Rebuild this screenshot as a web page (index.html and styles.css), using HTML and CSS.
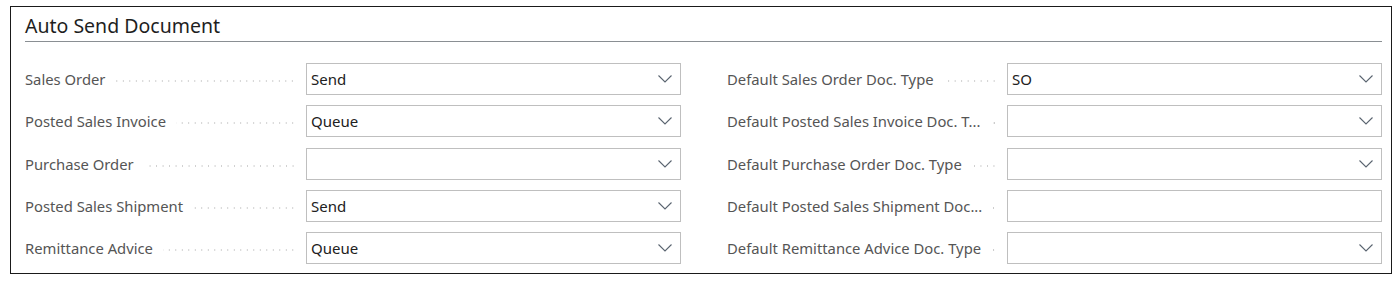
FILE: index.html
```html
<!DOCTYPE html>
<html lang="en">
<head>
    <meta charset="UTF-8">
    <title>Auto Send Document</title>
    <link rel="stylesheet" href="styles.css">
</head>
<body>
    <div class="frame">
        <h2 class="group-title">Auto Send Document</h2>

        <div class="fields">
            <div class="column">
                <div class="field">
                    <span class="caption">Sales Order</span>
                    <span class="leader"></span>
                    <div class="input select"><span class="value">Send</span><svg class="chevron" viewBox="0 0 14 8"><path d="M0.5 0.5 L7 7 L13.5 0.5"/></svg></div>
                </div>
                <div class="field">
                    <span class="caption">Posted Sales Invoice</span>
                    <span class="leader"></span>
                    <div class="input select"><span class="value">Queue</span><svg class="chevron" viewBox="0 0 14 8"><path d="M0.5 0.5 L7 7 L13.5 0.5"/></svg></div>
                </div>
                <div class="field">
                    <span class="caption">Purchase Order</span>
                    <span class="leader"></span>
                    <div class="input select"><span class="value"></span><svg class="chevron" viewBox="0 0 14 8"><path d="M0.5 0.5 L7 7 L13.5 0.5"/></svg></div>
                </div>
                <div class="field">
                    <span class="caption">Posted Sales Shipment</span>
                    <span class="leader"></span>
                    <div class="input select"><span class="value">Send</span><svg class="chevron" viewBox="0 0 14 8"><path d="M0.5 0.5 L7 7 L13.5 0.5"/></svg></div>
                </div>
                <div class="field">
                    <span class="caption">Remittance Advice</span>
                    <span class="leader"></span>
                    <div class="input select"><span class="value">Queue</span><svg class="chevron" viewBox="0 0 14 8"><path d="M0.5 0.5 L7 7 L13.5 0.5"/></svg></div>
                </div>
            </div>

            <div class="column">
                <div class="field">
                    <span class="caption">Default Sales Order Doc. Type</span>
                    <span class="leader"></span>
                    <div class="input select"><span class="value">SO</span><svg class="chevron" viewBox="0 0 14 8"><path d="M0.5 0.5 L7 7 L13.5 0.5"/></svg></div>
                </div>
                <div class="field">
                    <span class="caption">Default Posted Sales Invoice Doc. T...</span>
                    <span class="leader"></span>
                    <div class="input select"><span class="value"></span><svg class="chevron" viewBox="0 0 14 8"><path d="M0.5 0.5 L7 7 L13.5 0.5"/></svg></div>
                </div>
                <div class="field">
                    <span class="caption">Default Purchase Order Doc. Type</span>
                    <span class="leader"></span>
                    <div class="input select"><span class="value"></span><svg class="chevron" viewBox="0 0 14 8"><path d="M0.5 0.5 L7 7 L13.5 0.5"/></svg></div>
                </div>
                <div class="field">
                    <span class="caption">Default Posted Sales Shipment Doc...</span>
                    <span class="leader"></span>
                    <div class="input"><span class="value"></span></div>
                </div>
                <div class="field">
                    <span class="caption">Default Remittance Advice Doc. Type</span>
                    <span class="leader"></span>
                    <div class="input select"><span class="value"></span><svg class="chevron" viewBox="0 0 14 8"><path d="M0.5 0.5 L7 7 L13.5 0.5"/></svg></div>
                </div>
            </div>
        </div>
    </div>
</body>
</html>
```

FILE: styles.css
```css
:root {
    --caption-color: #555555;
    --value-color: #212121;
    --input-border: #bfbfbf;
    --leader-color: #cdcdcd;
}

body {
    margin: 0;
    padding: 6px 4px 0 10px;
    background-color: #ffffff;
    font-family: 'Noto Sans', 'Open Sans', sans-serif;
}

.frame {
    border: 1px solid #1a1a1a;
    height: 266px;
    padding: 0 9px 0 14px;
}

.group-title {
    margin: 0;
    padding: 7px 0 4px 0;
    font-size: 19.5px;
    font-weight: 400;
    color: #1e1e1e;
    border-bottom: 1px solid #8a8f93;
    line-height: 23px;
}

.fields {
    display: grid;
    grid-template-columns: 656px 655px;
    column-gap: 46px;
    padding-top: 21px;
}

.column {
    display: flex;
    flex-direction: column;
    gap: 10.25px;
}

.field {
    display: flex;
    align-items: center;
    height: 32px;
}

.caption {
    font-size: 14.8px;
    color: var(--caption-color);
    white-space: nowrap;
    flex: none;
}

.leader {
    flex: 1;
    height: 2px;
    margin: 4px 10px 0 10px;
    background-image: radial-gradient(circle, var(--leader-color) 0.7px, transparent 1px);
    background-size: 6.5px 2px;
    background-repeat: repeat-x;
    background-position: right center;
}

.input {
    width: 375px;
    height: 32px;
    box-sizing: border-box;
    border: 1px solid var(--input-border);
    display: flex;
    align-items: center;
    padding: 0 8px 0 4px;
    flex: none;
}

.value {
    flex: 1;
    font-size: 15px;
    color: var(--value-color);
}

.chevron {
    width: 14px;
    height: 8px;
    fill: none;
    stroke: #5a6470;
    stroke-width: 1.1;
}
```
